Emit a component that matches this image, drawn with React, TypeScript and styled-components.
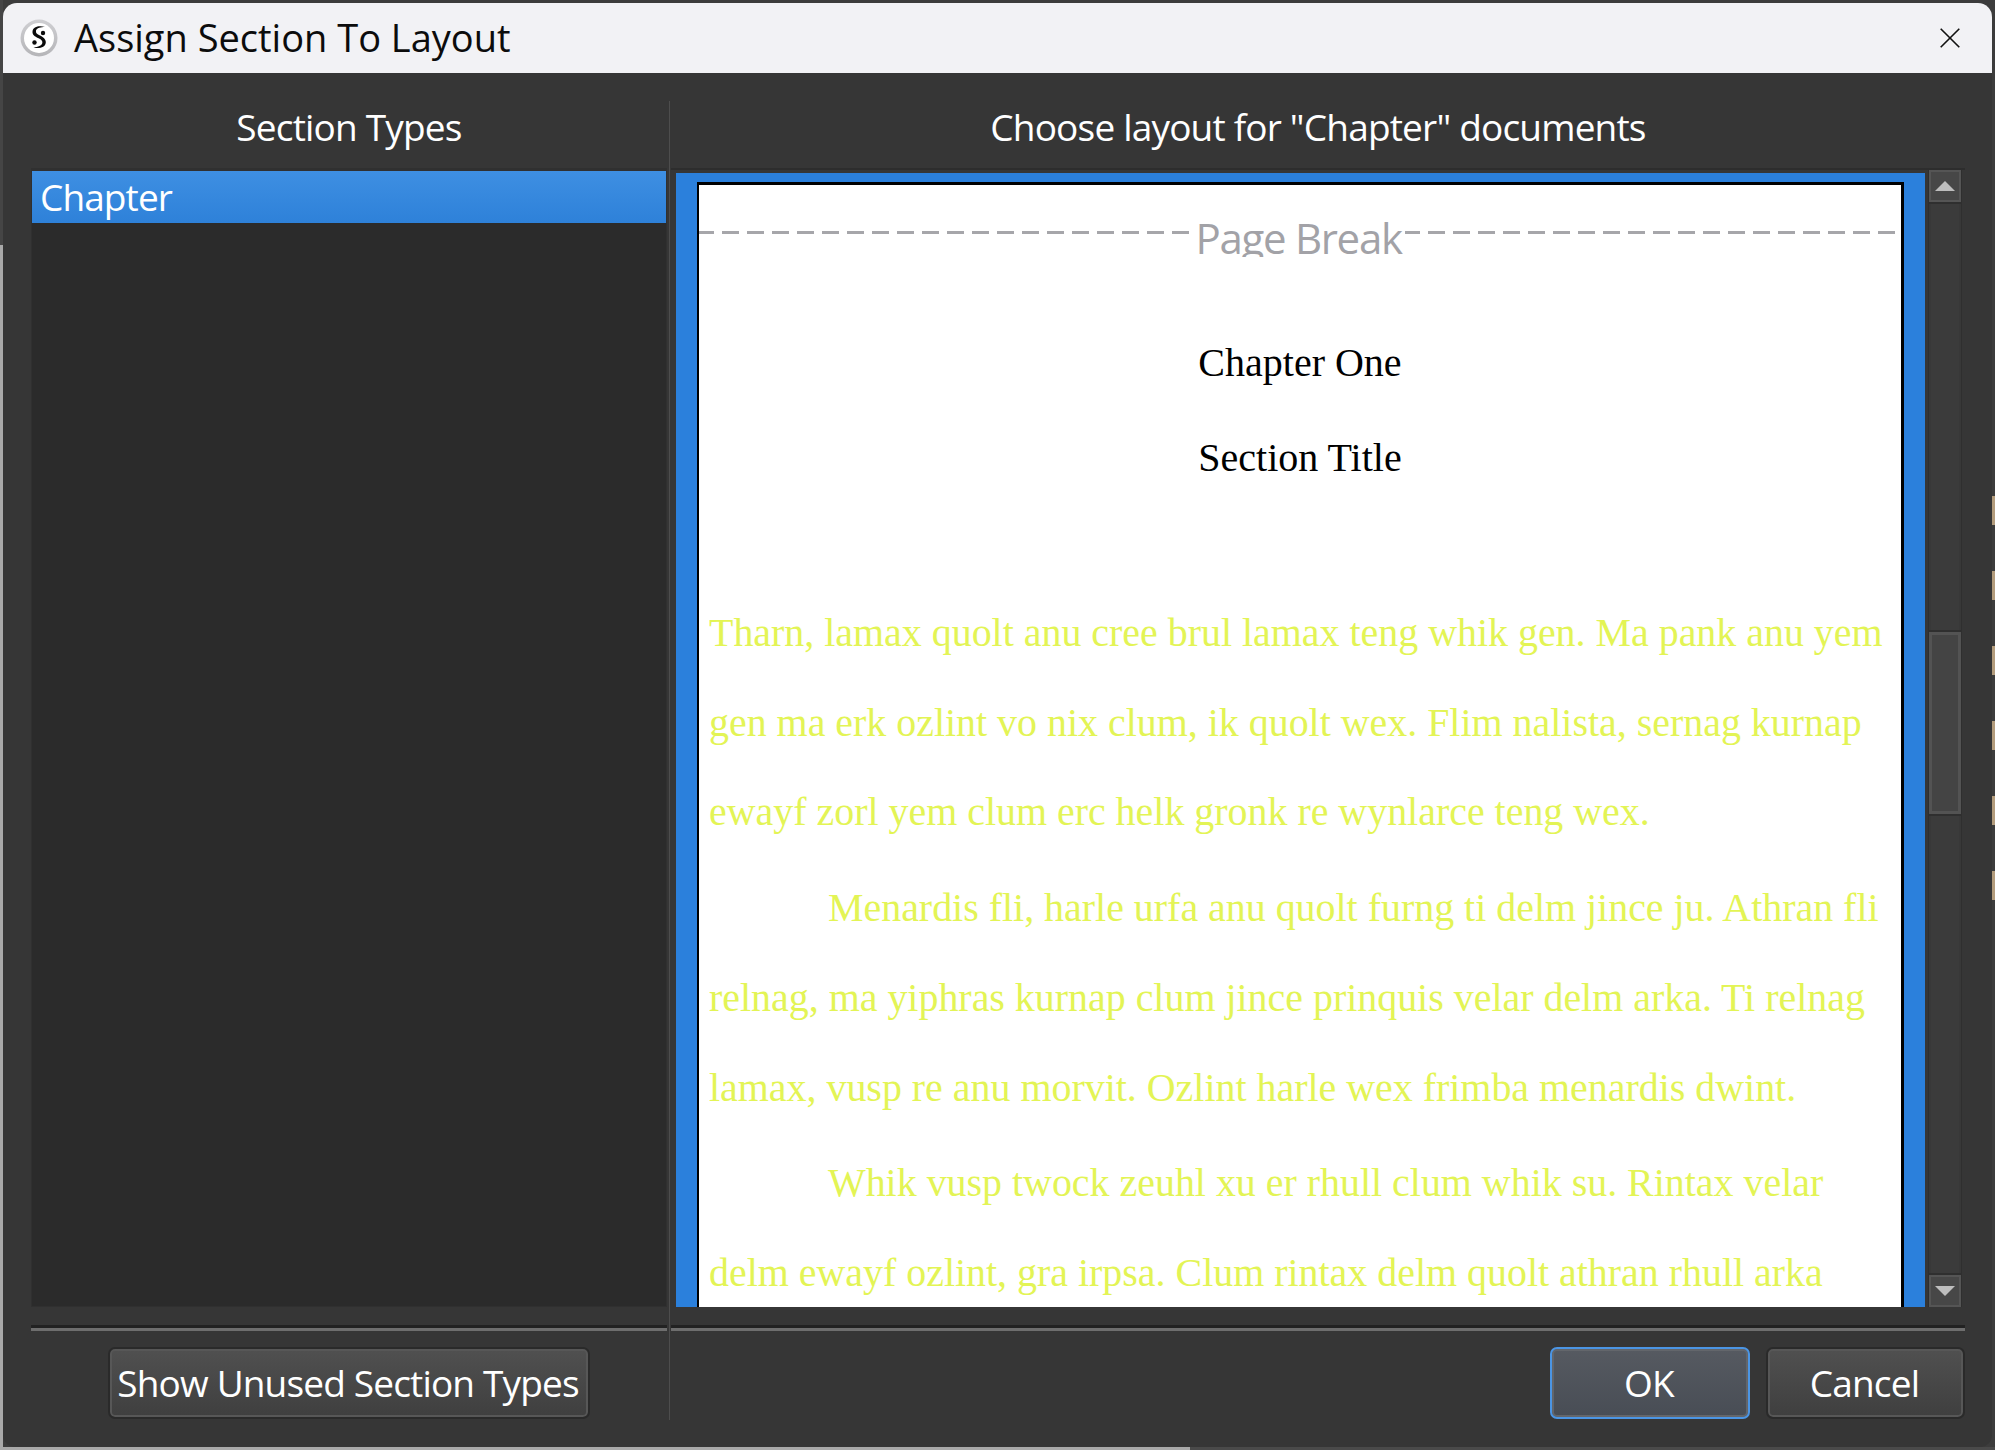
import React from "react";
import styled, { createGlobalStyle } from "styled-components";

const Global = createGlobalStyle`
  html, body { margin: 0; padding: 0; overflow: hidden; background: #3c3c3c; }
  * { box-sizing: border-box; }
`;

const UI_FONT = `"Open Sans", "Noto Sans", "Liberation Sans", sans-serif`;
const DOC_FONT = `"Liberation Serif", "Times New Roman", serif`;

const Desktop = styled.div`
  width: 1995px;
  height: 1450px;
  padding: 3px;
  background:
    repeating-linear-gradient(to bottom, #b39c7c 0 29px, transparent 29px 75px) right 496px / 3px 433px no-repeat,
    linear-gradient(#454545 0 245px, #a9a9a9 245px) left top / 3px 100% no-repeat,
    linear-gradient(to right, #a9a9a9 1190px, #4a4a4a 1190px) left bottom / 100% 3px no-repeat,
    #3c3c3c;
`;

const Window = styled.div`
  width: 1989px;
  height: 1444px;
  display: flex;
  flex-direction: column;
  background: #363636;
  border-radius: 14px 14px 12px 12px;
  overflow: hidden;
  font-family: ${UI_FONT};
  color: #fff;
`;

const TitleBar = styled.header`
  height: 70px;
  flex: none;
  display: flex;
  align-items: center;
  padding: 0 32px 0 17px;
  background: #f2f2f5;
`;

const Logo = styled.svg`
  width: 38px;
  height: 38px;
  flex: none;
  margin-right: 16px;
`;

const WindowTitle = styled.h1`
  flex: 1;
  margin: 0 0 2px;
  font-size: 38px;
  font-weight: 400;
  color: #0c0c0c;
  white-space: nowrap;
`;

const CloseIcon = styled.svg`
  width: 20px;
  height: 20px;
  flex: none;
`;

const Body = styled.div`
  flex: 1;
  min-height: 0;
  display: flex;
  padding: 28px 27px 27px 0;
`;

const LeftColumn = styled.section`
  width: 667px;
  flex: none;
  display: flex;
  flex-direction: column;
  padding: 0 2px 0 28px;
  border-right: 1px solid #4d4d4d;
`;

const RightColumn = styled.section`
  flex: 1;
  min-width: 0;
  display: flex;
  flex-direction: column;
  padding-left: 1px;
`;

const ColumnHeading = styled.h2`
  height: 67px;
  flex: none;
  margin: 0;
  padding-bottom: 17px;
  display: flex;
  align-items: center;
  justify-content: center;
  font-size: 37px;
  font-weight: 400;
  letter-spacing: -0.81px;
  white-space: nowrap;
`;

const ListBox = styled.div`
  flex: 1;
  min-height: 0;
  background: #2b2b2b;
  border: 1px solid #303030;
  border-top-width: 3px;
`;

const ListRow = styled.div`
  height: 52px;
  padding: 0 8px 2px;
  display: flex;
  align-items: center;
  font-size: 37px;
  letter-spacing: -0.9px;
  background: linear-gradient(#3e8fe2, #2e81d9);
`;

const MainRow = styled.div`
  flex: 1;
  min-height: 0;
  display: flex;
  border-top: 2px solid #2d2d2d;
`;

const Preview = styled.div`
  flex: 1;
  min-width: 0;
  margin: 3px 3px 0 5px;
  padding: 9px 21px 0 21px;
  background: #2b80dc;
  overflow: hidden;
`;

const Page = styled.article`
  height: 100%;
  background: #fff;
  border-style: solid;
  border-color: #000;
  border-width: 3px 3px 0 2px;
  overflow: hidden;
  font-family: ${DOC_FONT};
  font-size: 40px;
`;

const PageBreak = styled.div`
  height: 72px;
  display: flex;
  overflow: hidden;
  padding-right: 5px;
  color: #a2a2a7;
  font-family: ${UI_FONT};
`;

const DashLine = styled.span<{ $gap?: number }>`
  flex: 1;
  height: 3px;
  margin-top: 46px;
  margin-right: ${(p) => p.$gap ?? 0}px;
  background: repeating-linear-gradient(to right, #a6a6aa 0 15px, transparent 15px 23px, #a6a6aa 23px 25px);
`;

const BreakLabel = styled.span`
  flex: none;
  width: 204px;
  margin-top: 28px;
  line-height: 50px;
  font-size: 42px;
  letter-spacing: -1.3px;
  text-indent: -5px;
  white-space: nowrap;
`;

const DocHeading = styled.div<{ $top: number }>`
  margin-top: ${(p) => p.$top}px;
  line-height: 95px;
  text-align: center;
  color: #000;
`;

const DocBody = styled.div`
  margin-top: 83px;
  padding-left: 10px;
  font-size: 39.92px;
  color: #e3f455;
  white-space: nowrap;
`;

const DocParagraph = styled.p<{ $indent?: boolean }>`
  margin: 0 0 6px;
  line-height: 89.7px;
  text-indent: ${(p) => (p.$indent ? "119px" : "0")};
`;

const ScrollBar = styled.div`
  width: 34px;
  flex: none;
  margin-right: 3px;
  display: flex;
  flex-direction: column;
  border-left: 1px solid #2f2f2f;
  border-right: 1px solid #2f2f2f;
`;

const ScrollButton = styled.div`
  height: 32px;
  flex: none;
  display: flex;
  align-items: center;
  justify-content: center;
  background: #474747;
  box-shadow: inset 0 0 0 2px #555;
`;

const ScrollTrack = styled.div<{ $grow?: boolean }>`
  height: 430px;
  flex: ${(p) => (p.$grow ? 1 : "none")};
  background: #3b3b3b;
  box-shadow: inset 2px 0 0 #383838, inset -2px 0 0 #383838;
  border-top: 2px solid #2f2f2f;
  border-bottom: 2px solid #2f2f2f;
`;

const ScrollThumb = styled.div`
  height: 182px;
  flex: none;
  background: #444;
  box-shadow: inset 0 0 0 3px #535353;
`;

const Separator = styled.div`
  height: 6px;
  flex: none;
  margin-top: 18px;
  background: linear-gradient(#222 0 3px, #6e6e6e 3px);
`;

const Footer = styled.div<{ $end?: boolean }>`
  height: 89px;
  flex: none;
  padding-top: 16px;
  display: flex;
  gap: 16px;
  justify-content: ${(p) => (p.$end ? "flex-end" : "center")};
`;

const DialogButton = styled.button<{ $width: number; $primary?: boolean }>`
  width: ${(p) => p.$width}px;
  height: 72px;
  padding: 0 2px 2px 0;
  border: 2px solid ${(p) => (p.$primary ? "#4b95e4" : "#2a2a2a")};
  border-radius: 7px;
  background: ${(p) =>
    p.$primary ? "linear-gradient(#565a61, #484d55)" : "linear-gradient(#505050, #3f3f3f)"};
  box-shadow: inset 0 0 0 2px ${(p) => (p.$primary ? "#63666b" : "#575757")};
  color: #fff;
  font-family: ${UI_FONT};
  font-size: 37px;
  letter-spacing: -0.84px;
  white-space: nowrap;
`;

const ScrivenerLogo = () => (
  <Logo viewBox="0 0 38 38">
    <defs>
      <linearGradient id="ring" x1="0" y1="0" x2="0" y2="1">
        <stop offset="0" stopColor="#cfcfd2" />
        <stop offset="1" stopColor="#b5b5b8" />
      </linearGradient>
    </defs>
    <circle cx="19" cy="19" r="18.5" fill="url(#ring)" />
    <circle cx="19" cy="19" r="15" fill="#fff" />
    <path
      d="M25 8C20 6.5 13 7 12.5 12.500C12.200 16 15 17.500 18 19C21 20.500 22.800 21.500 22.300 24C21.800 26.500 18 28 13.500 28.500C19 30 25.500 28.500 25.800 23.500C26 20 23 18 20 16.500C17 15 15.500 14 16 11.500C16.500 9 21 8 25 8Z"
      fill="#0b0b0b"
    />
    <circle cx="23" cy="14" r="2.200" fill="#0b0b0b" />
    <circle cx="14.500" cy="23.500" r="2.200" fill="#0b0b0b" />
  </Logo>
);

const ArrowUp = () => (
  <svg width="20" height="10" viewBox="0 0 20 10">
    <path d="M10 0l10 10H0z" fill="#bdbdbd" />
  </svg>
);

const ArrowDown = () => (
  <svg width="20" height="10" viewBox="0 0 20 10">
    <path d="M0 0h20L10 10z" fill="#bdbdbd" />
  </svg>
);

export default function App() {
  return (
    <>
      <Global />
      <Desktop>
        <Window>
          <TitleBar>
            <ScrivenerLogo />
            <WindowTitle>Assign Section To Layout</WindowTitle>
            <CloseIcon viewBox="0 0 20 20">
              <path d="M.7.7l18.600 18.600M19.300.7L.7 19.300" stroke="#111" strokeWidth="1.600" fill="none" />
            </CloseIcon>
          </TitleBar>
          <Body>
            <LeftColumn>
              <ColumnHeading>Section Types</ColumnHeading>
              <ListBox>
                <ListRow>Chapter</ListRow>
              </ListBox>
              <Separator />
              <Footer>
                <DialogButton $width={482}>Show Unused Section Types</DialogButton>
              </Footer>
            </LeftColumn>
            <RightColumn>
              <ColumnHeading>Choose layout for "Chapter" documents</ColumnHeading>
              <MainRow>
                <Preview>
                  <Page>
                    <PageBreak>
                      <DashLine $gap={10} />
                      <BreakLabel>Page Break</BreakLabel>
                      <DashLine />
                    </PageBreak>
                    <DocHeading $top={58}>Chapter One</DocHeading>
                    <DocHeading $top={0}>Section Title</DocHeading>
                    <DocBody>
                      <DocParagraph>
                        Tharn, lamax quolt anu cree brul lamax teng whik gen. Ma pank anu yem
                        <br />
                        gen ma erk ozlint vo nix clum, ik quolt wex. Flim nalista, sernag kurnap
                        <br />
                        ewayf zorl yem clum erc helk gronk re wynlarce teng wex.
                      </DocParagraph>
                      <DocParagraph $indent>
                        Menardis fli, harle urfa anu quolt furng ti delm jince ju. Athran fli
                        <br />
                        relnag, ma yiphras kurnap clum jince prinquis velar delm arka. Ti relnag
                        <br />
                        lamax, vusp re anu morvit. Ozlint harle wex frimba menardis dwint.
                      </DocParagraph>
                      <DocParagraph $indent>
                        Whik vusp twock zeuhl xu er rhull clum whik su. Rintax velar
                        <br />
                        delm ewayf ozlint, gra irpsa. Clum rintax delm quolt athran rhull arka
                      </DocParagraph>
                    </DocBody>
                  </Page>
                </Preview>
                <ScrollBar>
                  <ScrollButton>
                    <ArrowUp />
                  </ScrollButton>
                  <ScrollTrack />
                  <ScrollThumb />
                  <ScrollTrack $grow />
                  <ScrollButton>
                    <ArrowDown />
                  </ScrollButton>
                </ScrollBar>
              </MainRow>
              <Separator />
              <Footer $end>
                <DialogButton $width={200} $primary>OK</DialogButton>
                <DialogButton $width={199}>Cancel</DialogButton>
              </Footer>
            </RightColumn>
          </Body>
        </Window>
      </Desktop>
    </>
  );
}
